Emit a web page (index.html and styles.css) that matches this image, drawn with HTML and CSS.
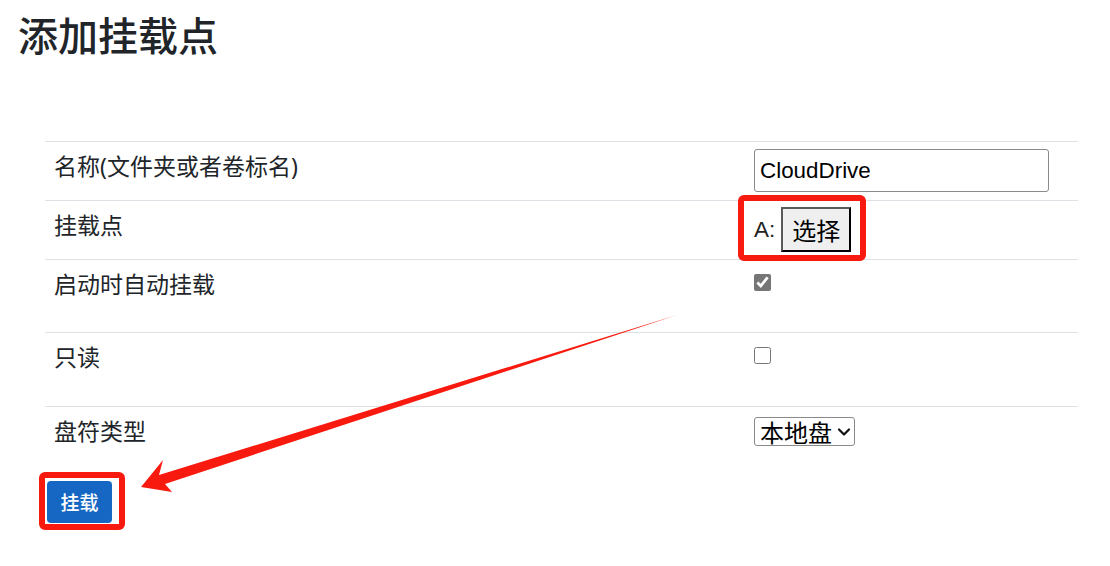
FILE: index.html
```html
<!DOCTYPE html>
<html lang="zh-CN">
<head>
<meta charset="utf-8">
<title>添加挂载点</title>
<link rel="stylesheet" href="styles.css">
</head>
<body>
<div class="page">
  <h1 class="title">添加挂载点</h1>
  <table class="form-table">
    <tr class="row row-name">
      <td class="label">名称(文件夹或者卷标名)</td>
      <td class="field"><input class="text-input" type="text" value="CloudDrive"></td>
    </tr>
    <tr class="row row-point">
      <td class="label">挂载点</td>
      <td class="field field-point"><span class="drive">A:</span> <button class="pick-btn" type="button">选择</button></td>
    </tr>
    <tr class="row row-check">
      <td class="label">启动时自动挂载</td>
      <td class="field field-check"><input class="check" type="checkbox" checked></td>
    </tr>
    <tr class="row row-check2">
      <td class="label">只读</td>
      <td class="field field-check"><input class="check" type="checkbox"></td>
    </tr>
    <tr class="row row-type">
      <td class="label">盘符类型</td>
      <td class="field field-type">
        <span class="select-wrap">
          <select class="type-select"><option>本地盘</option></select>
          <svg class="chev" width="14" height="10" viewBox="0 0 14 10"><path d="M2 2.5 L7 7.5 L12 2.5" fill="none" stroke="#111" stroke-width="2.2" stroke-linecap="round" stroke-linejoin="round"/></svg>
        </span>
      </td>
    </tr>
  </table>
  <div class="actions"><button class="mount-btn" type="button">挂载</button></div>

  <div class="mark mark-point"></div>
  <div class="mark mark-mount"></div>
  <svg class="arrow" width="1110" height="566" viewBox="0 0 1110 566">
    <polygon fill="#f81a0e" points="141,487 163,460 159,475 677,315 165,484 172,492"/>
  </svg>
</div>
</body>
</html>
```

FILE: styles.css
```css
html, body {
  margin: 0;
  padding: 0;
  background: #ffffff;
}

.page {
  position: relative;
  width: 1110px;
  height: 566px;
  overflow: hidden;
  font-family: "Noto Sans", "Noto Sans CJK SC", sans-serif;
  color: #212529;
}

.title {
  margin: 10px 0 0 18px;
  font-family: "Noto Sans CJK SC", sans-serif;
  font-size: 40px;
  font-weight: 500;
  line-height: 48px;
  color: #212529;
}

.form-table {
  margin: 83px 0 0 45px;
  width: 1033px;
  border-collapse: collapse;
  table-layout: fixed;
}

.form-table td {
  border-top: 1px solid #dee2e6;
  vertical-align: top;
  padding: 6px 10px 0 9px;
  font-size: 23px;
  line-height: 34px;
  font-family: "Noto Sans", "Noto Sans CJK SC", sans-serif;
  color: #212529;
  box-sizing: border-box;
}

.form-table td.label {
  width: 699px;
  padding-top: 7px;
}

.form-table td.field {
  padding-left: 10px;
}

.row-name td { height: 59px; }
.row-name td.field { padding-top: 7px; }
.row-point td { height: 59px; }
.row-point td.field { padding-top: 6px; }
.row-check td { height: 73px; }
.row-check2 td { height: 74px; }
.row-type td { height: 58px; }

.text-input {
  display: block;
  width: 295px;
  height: 43px;
  box-sizing: border-box;
  border: 1px solid #8a8a8a;
  border-radius: 3px;
  padding: 0 5px;
  font-family: "Liberation Sans", Arial, sans-serif;
  font-size: 22.4px;
  color: #000;
}

.field-point {
  white-space: nowrap;
}

.drive {
  font-family: "Liberation Sans", Arial, sans-serif;
  font-size: 22.4px;
  color: #222;
  vertical-align: middle;
}

.pick-btn {
  width: 70px;
  height: 45px;
  box-sizing: border-box;
  border-style: solid;
  border-width: 2px;
  border-color: #5a5a5a #000 #000 #5a5a5a;
  background: #efefef;
  font-family: "Noto Sans CJK SC", sans-serif;
  font-size: 24px;
  color: #000;
  padding: 0;
  vertical-align: middle;
  border-radius: 0;
}

.form-table td.field-check {
  padding-top: 14px;
}

.check {
  width: 17px;
  height: 17px;
  margin: 0;
  accent-color: #767676;
  display: block;
}

.form-table td.field-type {
  padding-top: 10px;
}

.select-wrap {
  position: relative;
  display: inline-block;
  width: 101px;
  height: 29px;
  vertical-align: top;
}

.type-select {
  -webkit-appearance: none;
  appearance: none;
  display: block;
  height: 29px;
  width: 101px;
  box-sizing: border-box;
  font-family: "Noto Sans CJK SC", sans-serif;
  font-size: 24px;
  line-height: 27px;
  padding: 0 20px 0 5px;
  border: 1px solid #8a8a8a;
  border-radius: 3px;
  background: #fff;
  color: #000;
}

.chev {
  position: absolute;
  right: 4px;
  top: 10px;
  pointer-events: none;
}

.actions {
  margin: 16px 0 0 47px;
}

.mount-btn {
  width: 65px;
  height: 42px;
  border: none;
  border-radius: 4px;
  background: #1667c4;
  color: #fff;
  font-family: "Noto Sans CJK SC", sans-serif;
  font-size: 19px;
  font-weight: 500;
  padding: 0;
}

.mark {
  position: absolute;
  border: 6px solid #f81a0e;
  border-radius: 6px;
  box-sizing: border-box;
  pointer-events: none;
}

.mark-point {
  left: 738px;
  top: 195px;
  width: 128px;
  height: 66px;
}

.mark-mount {
  left: 39px;
  top: 472px;
  width: 86px;
  height: 58px;
}

.arrow {
  position: absolute;
  left: 0;
  top: 0;
  pointer-events: none;
}
```
